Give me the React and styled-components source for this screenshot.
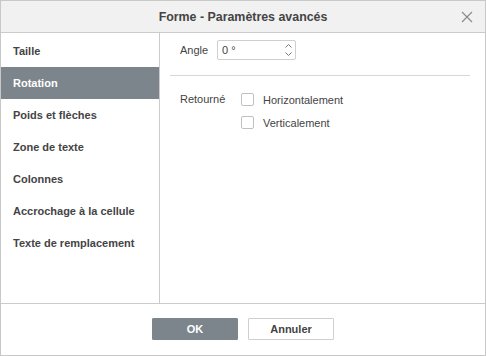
import React from 'react';
import styled, { createGlobalStyle } from 'styled-components';

const Global = createGlobalStyle`
  html, body { margin: 0; padding: 0; background: #fff; }
  body { font-family: Arial, "Liberation Sans", sans-serif; color: #444; }
  * { box-sizing: border-box; }
`;

const Dialog = styled.div`
  width: 486px;
  height: 356px;
  border: 1px solid #c8c8c8;
  display: flex;
  flex-direction: column;
  background: #fff;
`;

const Header = styled.div`
  height: 32px;
  flex: none;
  background: #f1f1f1;
  border-bottom: 1px solid #cbcbcb;
  display: flex;
  align-items: center;
  justify-content: center;
  position: relative;
  font-size: 12.4px;
  font-weight: bold;
  color: #444;
`;

const Close = styled.div`
  position: absolute;
  right: 12px;
  top: 10px;
  width: 12px;
  height: 12px;
  display: flex;
`;

const Body = styled.div`
  flex: 1;
  display: flex;
  min-height: 0;
`;

const Sidebar = styled.div`
  width: 159px;
  flex: none;
  border-right: 1px solid #cbcbcb;
  padding-top: 2px;
`;

const NavItem = styled.div`
  height: 32px;
  display: flex;
  align-items: center;
  padding-left: 12px;
  font-size: 11px;
  font-weight: bold;
  color: ${p => (p.active ? '#fff' : '#444')};
  background: ${p => (p.active ? '#7d858c' : 'transparent')};
`;

const Content = styled.div`
  flex: 1;
  padding: 7px 15px 0 10px;
`;

const Row = styled.div`
  display: flex;
  align-items: center;
  padding-left: 10px;
`;

const Label = styled.span`
  font-size: 11px;
  color: #444;
  width: ${p => p.w || 'auto'};
`;

const SpinBox = styled.div`
  width: 79px;
  height: 20px;
  border: 1px solid #cfcfcf;
  border-radius: 2px;
  display: flex;
  align-items: center;
  justify-content: space-between;
  padding: 0 3px 0 4px;
  font-size: 11px;
  color: #444;
`;

const Arrows = styled.div`
  display: flex;
  flex-direction: column;
  gap: 4px;
`;

const Divider = styled.div`
  height: 1px;
  background: #d8d8d8;
  margin: 15px 0 0;
`;

const Flip = styled.div`
  display: flex;
  padding-left: 10px;
  margin-top: 17px;
`;

const Checks = styled.div`
  display: flex;
  flex-direction: column;
  gap: 10px;
`;

const Check = styled.label`
  display: flex;
  align-items: center;
  gap: 9px;
  font-size: 11px;
  color: #444;
  height: 13px;
`;

const Box = styled.span`
  width: 13px;
  height: 13px;
  border: 1px solid #c0c0c0;
  border-radius: 2px;
  background: #fff;
  display: inline-block;
`;

const Footer = styled.div`
  height: 52px;
  flex: none;
  border-top: 1px solid #cbcbcb;
  display: flex;
  justify-content: center;
  align-items: flex-start;
  padding-top: 14px;
  gap: 10px;
`;

const Button = styled.button`
  width: 86px;
  height: 22px;
  border-radius: 1px;
  font-family: Arial, "Liberation Sans", sans-serif;
  font-size: 11px;
  font-weight: bold;
  cursor: pointer;
  border: 1px solid ${p => (p.primary ? '#7d858c' : '#cfcfcf')};
  background: ${p => (p.primary ? '#7d858c' : '#fff')};
  color: ${p => (p.primary ? '#fff' : '#444')};
`;

const items = [
  'Taille',
  'Rotation',
  'Poids et flèches',
  'Zone de texte',
  'Colonnes',
  'Accrochage à la cellule',
  'Texte de remplacement',
];

export default function App() {
  return (
    <>
      <Global />
      <Dialog>
        <Header>
          Forme - Paramètres avancés
          <Close>
            <svg width="12" height="12" viewBox="0 0 12 12">
              <path d="M1 1L11 11M11 1L1 11" stroke="#888" strokeWidth="1.1" fill="none" />
            </svg>
          </Close>
        </Header>
        <Body>
          <Sidebar>
            {items.map(it => (
              <NavItem key={it} active={it === 'Rotation'}>{it}</NavItem>
            ))}
          </Sidebar>
          <Content>
            <Row>
              <Label w="37px">Angle</Label>
              <SpinBox>
                <span>0 °</span>
                <Arrows>
                  <svg width="7" height="4" viewBox="0 0 7 4">
                    <path d="M0.5 3.5L3.5 0.5L6.5 3.5" stroke="#777" fill="none" />
                  </svg>
                  <svg width="7" height="4" viewBox="0 0 7 4">
                    <path d="M0.5 0.5L3.5 3.5L6.5 0.5" stroke="#777" fill="none" />
                  </svg>
                </Arrows>
              </SpinBox>
            </Row>
            <Divider />
            <Flip>
              <Label w="61px">Retourné</Label>
              <Checks>
                <Check><Box />Horizontalement</Check>
                <Check><Box />Verticalement</Check>
              </Checks>
            </Flip>
          </Content>
        </Body>
        <Footer>
          <Button primary>OK</Button>
          <Button>Annuler</Button>
        </Footer>
      </Dialog>
    </>
  );
}
